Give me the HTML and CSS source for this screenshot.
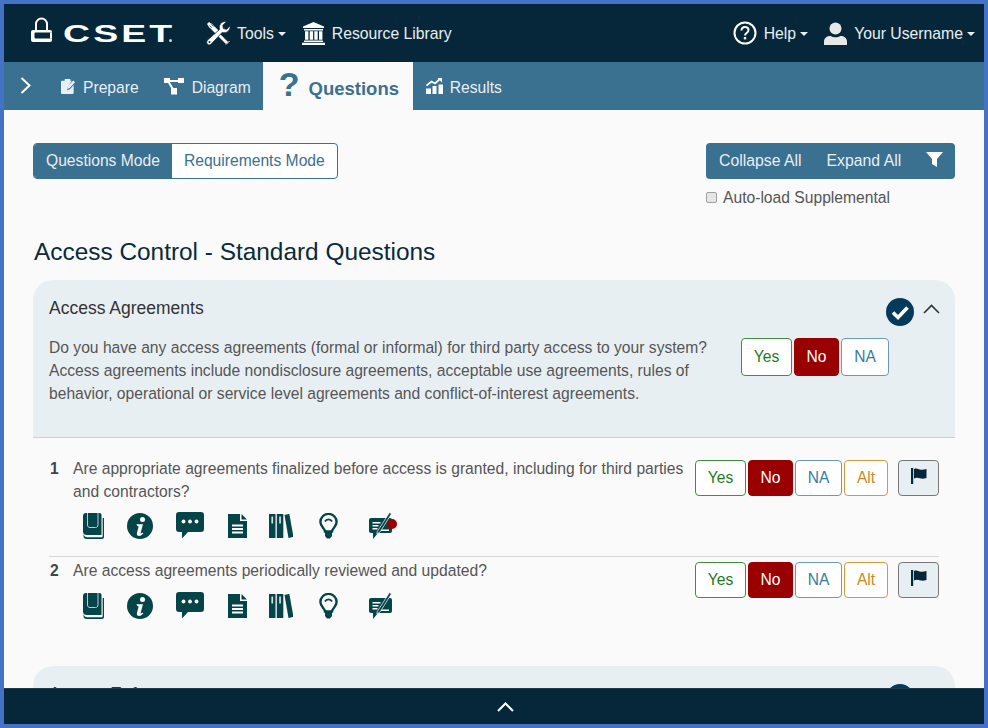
FILE: index.html
```html
<!DOCTYPE html>
<html>
<head lang="en">
    <meta charset="UTF-8">
    <title>CSET</title>
    <link rel="stylesheet" href="styles.css">
</head>
<body>
<svg class="defs" width="0" height="0">
    <symbol id="i-book" viewBox="0 0 21 26">
        <path d="M0.500 20.500V23c0 1.700 1.300 3 3 3H19c1.100 0 2-.9 2-2V5h-1.300v18c0 .8-.5 1.300-1.300 1.300H4c-1.800 0-3-1.300-3.500-3.800z" fill="#05454a"/>
        <path d="M3 0h13.500a2 2 0 0 1 2 2v20H4c-2.400 0-4-1-4-3.500V3a3 3 0 0 1 3-3z" fill="#05454a"/>
        <path d="M4.500 0v12c0 1.500 1 2.500 2.500 2.500h5.500c1.500 0 2.500-1 2.500-2.500V0" fill="none" stroke="#b9cccc" stroke-width="1"/>
    </symbol>
    <symbol id="i-info" viewBox="0 0 26 26">
        <circle cx="13" cy="13" r="13" fill="#05454a"/>
        <circle cx="15.500" cy="6.500" r="2.500" fill="#fff"/>
        <path d="M9.500 11.200h6.500l-2.400 8.700c-.2.800.5 1 1.900-.3l.8.700c-1.700 2.100-3.400 2.900-5 2.500-1.400-.4-1.700-1.500-1.300-2.900l1.600-6.300c.1-.6-.4-.8-1.400-.7z" fill="#fff"/>
    </symbol>
    <symbol id="i-comment" viewBox="0 0 28 27">
        <path d="M3 0h22a3 3 0 0 1 3 3v14a3 3 0 0 1-3 3H12l-6 6.500V20H3a3 3 0 0 1-3-3V3a3 3 0 0 1 3-3z" fill="#05454a"/>
        <circle cx="7.500" cy="9.500" r="1.900" fill="#fff"/>
        <circle cx="14" cy="9.500" r="1.900" fill="#fff"/>
        <circle cx="20.500" cy="9.500" r="1.900" fill="#fff"/>
    </symbol>
    <symbol id="i-doc" viewBox="0 0 19 24">
        <path d="M0 0h12v7h7v17H0z" fill="#05454a"/>
        <path d="M13.500 0l5.500 5.500h-5.500z" fill="#05454a"/>
        <path d="M4 10.500h11v2H4zM4 14h11v2H4zM4 17.500h11v2H4z" fill="#fff"/>
    </symbol>
    <symbol id="i-books" viewBox="0 0 24 24">
        <path d="M0 0h6.500v24H0zM7.800 0h6.500v24H7.800z" fill="#05454a"/>
        <path d="M15.500 1l4.800-1.200L24.500 23l-5 1z" fill="#05454a"/>
        <path d="M2.400 2.500h1.700v7H2.400zM10.200 2.500h1.700v7h-1.700z" fill="#d5e0e0"/>
    </symbol>
    <symbol id="i-bulb" viewBox="0 0 19 26">
        <path d="M6 18.500c0-3-4.600-4.500-4.600-9.500a8.100 8.100 0 0 1 16.200 0c0 5-4.600 6.500-4.600 9.500z" fill="none" stroke="#05454a" stroke-width="2.400"/>
        <path d="M6 19h7v4l-2 2.500H8l-2-2.500z" fill="#05454a"/>
        <path d="M6 8.500a4 4 0 0 1 7 0" fill="none" stroke="#05454a" stroke-width="1.800"/>
    </symbol>
    <symbol id="i-note" viewBox="0 0 23 27">
        <path d="M2 6h19a2 2 0 0 1 2 2v11a2 2 0 0 1-2 2H9l-5 6v-6H2a2 2 0 0 1-2-2V8a2 2 0 0 1 2-2z" fill="#05454a"/>
        <path d="M3.500 10h8v1.500h-8zM3.500 13h6v1.500h-6zM3.500 16h5v1.500h-5zM12 17.500h8V19h-8z" fill="#fff"/>
        <path d="M8 20L20.500 0.500l2 1.300L11 20l-3 2z" fill="#05454a" stroke="#fff" stroke-width=".7"/>
    </symbol>
    <symbol id="i-check" viewBox="0 0 28 28">
        <circle cx="14" cy="14" r="14" fill="#053a5a"/>
        <path d="M7 14.500l5 5 9.500-10" fill="none" stroke="#fff" stroke-width="3.600"/>
    </symbol>
    <symbol id="i-flag" viewBox="0 0 16 16">
        <path d="M0 0h2.200v16H0z" fill="#052739"/>
        <path d="M3 1c3-1.500 5 .8 7 .8 2 0 4-.4 5.500-.8v9c-2 .7-4 .8-5.500.6-2.500-.4-4.500-1.500-7 0z" fill="#052739"/>
    </symbol>
</svg>

<div class="frame">
    <div class="topbar">
        <div class="brand">
            <svg class="lock" viewBox="0 0 21 25" width="21" height="25">
                <path d="M5 13V7a5.500 5.500 0 0 1 11 0v6" fill="none" stroke="#fff" stroke-width="2"/>
                <rect x="0" y="13" width="21" height="12" rx="2" fill="#fff"/>
                <path d="M4.500 15.500H21v6H4.500a1 1 0 0 1-1-1v-4a1 1 0 0 1 1-1z" fill="#052739"/>
                <path d="M19 15.500h2v6h-2z" fill="#fff"/>
            </svg>
            <span class="wordmark">CSET</span>
            <i class="reg"></i>
        </div>
        <a class="top-link tools">
            <svg viewBox="0 0 24 24" width="24" height="24">
                <path d="M2.500 5.500l3-3 7 7-3 3z" fill="#fff"/>
                <path d="M1 3l2-2 3.500 2.500L3.500 6.500z" fill="#fff"/>
                <path d="M3.500 4.500l2.200 2.200M5.200 3.300l2.200 2.200" stroke="#052739" stroke-width=".8"/>
                <path d="M10 11l11 11" stroke="#fff" stroke-width="3"/>
                <path d="M20 23.500l3.500-3.500" stroke="#fff" stroke-width="1"/>
                <path d="M1.800 18.800L13.500 8.500c-.8-3 .3-5.500 2.300-7 1.500-1 3.200-1.200 4.700-.8l-3.700 3.600.6 3.300 3.300.7L24 4.800c.4 2-.3 4-1.800 5.400-1.800 1.600-4 2-6 1.200L5.300 23c-1.300 1.300-3 1.200-4 .1-1-1.100-.9-3 .5-4.300z" fill="#fff" stroke="#052739" stroke-width=".8"/>
                <circle cx="3.500" cy="21" r="1" fill="#052739"/>
            </svg>
            <span>Tools</span><i class="caret"></i>
        </a>
        <a class="top-link library">
            <svg viewBox="0 0 23 23" width="23" height="23">
                <path d="M11.500 0L22 4.500V6H1V4.500z" fill="#fff"/>
                <path d="M2 7h19v1.500H2zM3 9.300h3.400v8.400H3zM7.700 9.300h3.400v8.400H7.700zM12.300 9.300h3.400v8.400h-3.400zM17 9.300h3.400v8.400H17zM2 18.500h19V20H2zM0 20.800h23V23H0z" fill="#fff"/>
            </svg>
            <span>Resource Library</span>
        </a>
        <div class="spacer"></div>
        <a class="top-link help">
            <svg viewBox="0 0 24 24" width="24" height="24">
                <circle cx="12" cy="12" r="10.500" fill="none" stroke="#fff" stroke-width="2"/>
                <path d="M8.500 9.500c0-2.300 1.600-3.500 3.500-3.500s3.500 1.200 3.500 3.200c0 2.800-3.500 2.800-3.500 5.300" fill="none" stroke="#fff" stroke-width="2"/>
                <rect x="10.800" y="16" width="2.400" height="2.400" fill="#fff"/>
            </svg>
            <span>Help</span><i class="caret"></i>
        </a>
        <a class="top-link user">
            <svg viewBox="0 0 23 23" width="23" height="23">
                <circle cx="11.500" cy="6.500" r="6" fill="#e8e8e8"/>
                <path d="M0 23v-3.500c0-3.500 3-5.500 6.500-5.500 1.500 1 3 1.300 5 1.300s3.500-.3 5-1.300c3.500 0 6.500 2 6.500 5.500V23z" fill="#e8e8e8"/>
            </svg>
            <span>Your Username</span><i class="caret"></i>
        </a>
    </div>

    <div class="subnav">
        <svg class="toggle" viewBox="0 0 11 17" width="11" height="17">
            <path d="M1.500 1l8 7.500-8 7.500" fill="none" stroke="#fff" stroke-width="2"/>
        </svg>
        <a class="tab prepare">
            <svg viewBox="0 0 16 17" width="15" height="16">
                <path d="M1 3h3V1h6v2h1.500L7 10l-.5 3 3-1 4-4.500V16a1 1 0 0 1-1 1H1a1 1 0 0 1-1-1V4a1 1 0 0 1 1-1z" fill="#e8eef2"/>
                <path d="M13 2.500l2 2-6 6.500-2.500.7.600-2.700z" fill="#e8eef2"/>
            </svg>
            <span>Prepare</span>
        </a>
        <a class="tab diagram">
            <svg viewBox="0 0 20 17" width="20" height="17">
                <path d="M4 3h12M4 3l6 10" stroke="#fff" stroke-width="2" fill="none"/>
                <rect x="0" y="0" width="6" height="5" fill="#fff"/>
                <rect x="14" y="0" width="6" height="5" fill="#fff"/>
                <rect x="7" y="10" width="6" height="6.500" fill="#fff"/>
            </svg>
            <span>Diagram</span>
        </a>
        <a class="tab active">
            <span class="q-mark">?</span>
            <span>Questions</span>
        </a>
        <a class="tab results">
            <svg viewBox="0 0 17 16" width="17" height="16">
                <path d="M0 10.500h5V16H0zM6.500 8h4v8h-4zM12.500 6.500H17V16h-4.500z" fill="#fff"/>
                <path d="M.5 7.500L5.500 3.500l3.500 2L14 1" fill="none" stroke="#fff" stroke-width="1.800"/>
                <path d="M11.500 0H16v4.500z" fill="#fff"/>
            </svg>
            <span>Results</span>
        </a>
    </div>

    <div class="main">
        <div class="toolbar">
            <div class="mode-group">
                <a class="mode on">Questions Mode</a>
                <a class="mode">Requirements Mode</a>
            </div>
            <div class="tools-side">
                <div class="action-group">
                    <a class="action collapse">Collapse All</a>
                    <a class="action expand">Expand All</a>
                    <svg class="funnel" viewBox="0 0 17 15" width="17" height="15">
                        <path d="M0 0h17l-6 7v8l-5-3V7z" fill="#fff"/>
                    </svg>
                </div>
                <label class="autoload"><input type="checkbox"><span>Auto-load Supplemental</span></label>
            </div>
        </div>

        <h2 class="page-title">Access Control - Standard Questions</h2>

        <div class="card">
            <div class="card-head">
                <div class="card-title-row">
                    <span class="card-title">Access Agreements</span>
                    <svg class="check" width="28" height="28"><use href="#i-check"/></svg>
                    <svg class="chev" viewBox="0 0 17 10" width="17" height="10"><path d="M1 9l7.500-7.500L16 9" fill="none" stroke="#333" stroke-width="1.600"/></svg>
                </div>
                <div class="card-question">
                    <p>Do you have any access agreements (formal or informal) for third party access to your system? Access agreements include nondisclosure agreements, acceptable use agreements, rules of behavior, operational or service level agreements and conflict-of-interest agreements.</p>
                    <div class="answers head-answers">
                        <a class="ans yes">Yes</a>
                        <a class="ans no">No</a>
                        <a class="ans na">NA</a>
                    </div>
                </div>
            </div>

            <div class="q-list">
                <div class="q-row">
                    <span class="q-num">1</span>
                    <div class="q-body">
                        <p>Are appropriate agreements finalized before access is granted, including for third parties and contractors?</p>
                        <div class="q-icons">
                            <svg width="21" height="26"><use href="#i-book"/></svg>
                            <svg width="26" height="26"><use href="#i-info"/></svg>
                            <svg width="28" height="27"><use href="#i-comment"/></svg>
                            <svg width="19" height="24"><use href="#i-doc"/></svg>
                            <svg width="24" height="24"><use href="#i-books"/></svg>
                            <svg width="19" height="26"><use href="#i-bulb"/></svg>
                            <span class="note-wrap">
                                <svg width="23" height="27"><use href="#i-note"/></svg>
                                <i class="dot"></i>
                            </span>
                        </div>
                    </div>
                    <div class="answers">
                        <a class="ans yes">Yes</a>
                        <a class="ans no">No</a>
                        <a class="ans na">NA</a>
                        <a class="ans alt">Alt</a>
                        <a class="flag"><svg width="16" height="16"><use href="#i-flag"/></svg></a>
                    </div>
                </div>
                <div class="q-row">
                    <span class="q-num">2</span>
                    <div class="q-body">
                        <p>Are access agreements periodically reviewed and updated?</p>
                        <div class="q-icons">
                            <svg width="21" height="26"><use href="#i-book"/></svg>
                            <svg width="26" height="26"><use href="#i-info"/></svg>
                            <svg width="28" height="27"><use href="#i-comment"/></svg>
                            <svg width="19" height="24"><use href="#i-doc"/></svg>
                            <svg width="24" height="24"><use href="#i-books"/></svg>
                            <svg width="19" height="26"><use href="#i-bulb"/></svg>
                            <span class="note-wrap">
                                <svg width="23" height="27"><use href="#i-note"/></svg>
                            </span>
                        </div>
                    </div>
                    <div class="answers">
                        <a class="ans yes">Yes</a>
                        <a class="ans no">No</a>
                        <a class="ans na">NA</a>
                        <a class="ans alt">Alt</a>
                        <a class="flag"><svg width="16" height="16"><use href="#i-flag"/></svg></a>
                    </div>
                </div>
            </div>
        </div>

        <div class="card next-card">
            <div class="card-head">
                <div class="card-title-row">
                    <span class="card-title">Access Enforcement</span>
                    <svg class="check" width="28" height="28"><use href="#i-check"/></svg>
                    <svg class="chev" viewBox="0 0 17 10" width="17" height="10"><path d="M1 9l7.500-7.500L16 9" fill="none" stroke="#333" stroke-width="1.600"/></svg>
                </div>
            </div>
        </div>
    </div>

    <div class="bottombar">
        <svg viewBox="0 0 17 10" width="17" height="10"><path d="M1 9l7.500-7.500L16 9" fill="none" stroke="#fff" stroke-width="2"/></svg>
    </div>
</div>
</body>
</html>
```

FILE: styles.css
```css
*{
    margin: 0;
    padding: 0;
    box-sizing: border-box;
}
html,body{
    height: 100%;
    overflow: hidden;
}
body{
    font-family: "Liberation Sans", Arial, sans-serif;
    font-size: 15.65px;
    color: #555;
    background: #fafafa;
}
a{
    cursor: pointer;
}
svg{
    display: block;
    flex: none;
}
.defs{
    position: absolute;
}
.frame{
    display: flex;
    flex-direction: column;
    width: 988px;
    height: 728px;
    border: 4px solid #4472c4;
    background: #fafafa;
}

/* top bar */
.topbar{
    display: flex;
    align-items: center;
    height: 58px;
    padding-left: 27px;
    padding-right: 9px;
    background: #052739;
    color: #e8eef2;
    font-size: 15.75px;
    flex: none;
}
.brand{
    display: flex;
    align-items: center;
}
.lock{
    margin-bottom: 7px;
}
.wordmark{
    display: block;
    width: 106px;
    margin-left: 11px;
    margin-top: 2px;
    color: #fff;
    font-size: 24px;
    line-height: 24px;
    font-weight: bold;
    letter-spacing: 2px;
    transform: scaleX(1.56);
    transform-origin: left center;
}
.reg{
    display: block;
    width: 3px;
    height: 3px;
    margin-top: 14px;
    background: #cfd6da;
    border-radius: 50%;
}
.top-link{
    display: flex;
    align-items: center;
}
.top-link span{
    margin-top: 2px;
}
.tools{
    margin-left: 34px;
}
.tools span{
    margin-left: 7px;
}
.library{
    margin-left: 16px;
}
.library span{
    margin-left: 7px;
}
.help span{
    margin-left: 7px;
}
.user{
    margin-left: 16px;
}
.user span{
    margin-left: 7px;
}
.spacer{
    flex: 1;
}
.caret{
    display: block;
    width: 0;
    height: 0;
    margin-left: 4px;
    margin-top: 1px;
    border-top: 4.500px solid #e8eef2;
    border-left: 4.500px solid transparent;
    border-right: 4.500px solid transparent;
}

/* sub nav */
.subnav{
    display: flex;
    align-items: stretch;
    height: 48px;
    background: #3a7090;
    color: #e8eef2;
    font-size: 15.65px;
    flex: none;
}
.toggle{
    align-self: center;
    margin-left: 16px;
    margin-right: 30px;
    margin-top: -2px;
}
.tab{
    display: flex;
    align-items: center;
    gap: 8px;
    padding-top: 4px;
}
.tab svg{
    margin-top: -4px;
}
.prepare{
    gap: 7px;
    margin-right: 25px;
}
.diagram{
    margin-right: 12px;
}
.tab.active{
    height: 49px;
    width: 150px;
    padding-left: 16px;
    gap: 9px;
    background: #fafafa;
    color: #3a7090;
    font-size: 18.500px;
    font-weight: bold;
}
.q-mark{
    font-size: 34px;
    line-height: 34px;
    margin-top: -10px;
}
.results{
    margin-left: 13px;
    gap: 7px;
}

/* page */
.main{
    flex: 1;
    min-height: 0;
    overflow: hidden;
    padding: 33px 29px 0;
}
.toolbar{
    display: flex;
    justify-content: space-between;
    align-items: flex-start;
}
.mode-group{
    display: flex;
    height: 36px;
    font-size: 15.65px;
    line-height: 34px;
    color: #3a7090;
    background: #fff;
    border: 1px solid #3a7090;
    border-radius: 4px;
    overflow: hidden;
}
.mode{
    padding: 0 12px;
}
.mode.on{
    background: #3a7090;
    color: #e8eef2;
}
.tools-side{
    width: 249px;
}
.action-group{
    display: flex;
    align-items: center;
    height: 36px;
    padding-left: 13px;
    background: #3a7090;
    border-radius: 4px;
    color: #e8eef2;
    font-size: 15.8px;
}
.action{
    margin-right: 25px;
}
.funnel{
    margin-top: -4px;
}
.autoload{
    display: flex;
    align-items: center;
    margin-top: 10px;
    line-height: 18px;
}
.autoload input{
    appearance: none;
    width: 11px;
    height: 11px;
    margin: -2px 6px 0 0;
    background: #e6e6e6;
    border: 1px solid #a0a0a0;
    border-radius: 2px;
}
.page-title{
    margin-top: 30px;
    margin-bottom: 13px;
    margin-left: 1px;
    font-size: 24.4px;
    line-height: 30px;
    font-weight: normal;
    color: #0a2a3a;
}

/* cards */
.card{
    border-radius: 20px 20px 0 0;
}
.card-head{
    padding: 16px 16px 0;
    height: 158px;
    background: #e8eff3;
    border-bottom: 1px solid #ccd2d6;
    border-radius: 20px 20px 0 0;
}
.card-title-row{
    display: flex;
    align-items: center;
    height: 28px;
    margin-top: -2px;
}
.card-title{
    flex: 1;
    font-size: 17.5px;
    color: #333;
}
.check{
    margin-top: 8px;
}
.chev{
    margin-left: 9px;
    margin-right: -1px;
    margin-top: 1px;
}
.card-question{
    display: flex;
    align-items: flex-start;
    margin-top: 15px;
    line-height: 23px;
}
.card-question p{
    flex: 1;
    padding-right: 24px;
    margin-top: -1px;
}
.answers{
    display: flex;
    gap: 2px;
    margin-top: 3px;
}
.head-answers{
    margin-top: 1px;
    margin-right: 50px;
}
.ans{
    display: block;
    height: 36px;
    line-height: 34px;
    text-align: center;
    font-size: 15.6px;
    background: #fff;
    border: 1px solid;
    border-radius: 4px;
}
.head-answers .ans{
    height: 38px;
    line-height: 36px;
}
.yes{
    width: 51px;
    color: #1e7a1e;
    border-color: #3f8f3f;
}
.no{
    width: 45px;
    color: #fff;
    background: #990000;
    border-color: #990000;
}
.na{
    width: 47px;
    color: #3a7a9e;
    border-color: #6b9ab5;
}
.head-answers .na{
    width: 48px;
}
.alt{
    width: 44px;
    color: #c98a1e;
    border-color: #d19a3e;
}
.flag{
    display: flex;
    justify-content: center;
    width: 41px;
    height: 36px;
    margin-left: 8px;
    padding-top: 7px;
    background: #e8eff3;
    border: 1px solid #777;
    border-radius: 4px;
}

/* question rows */
.q-list{
    padding: 19px 16px 0;
}
.q-row{
    display: flex;
    align-items: flex-start;
    line-height: 23px;
    padding-top: 2px;
    padding-bottom: 17px;
    border-bottom: 1px solid #d8d8d8;
}
.q-row:first-child{
    padding-top: 0;
}
.q-row:last-child{
    border-bottom: 0;
    padding-bottom: 47px;
}
.q-row:last-child .q-icons{
    margin-top: 10px;
}
.q-num{
    width: 24px;
    padding-left: 1px;
    font-weight: bold;
    color: #444;
}
.q-body{
    flex: 1;
    padding-right: 10px;
}
.q-icons{
    display: grid;
    grid-template-columns: 44px 49px 52px 41px 50px 50px 30px;
    justify-items: start;
    align-items: center;
    height: 27px;
    margin-top: 9px;
    margin-left: 10px;
}
.note-wrap{
    display: block;
    position: relative;
    width: 23px;
    height: 27px;
}
.dot{
    position: absolute;
    top: 7px;
    left: 18px;
    width: 10px;
    height: 10px;
    background: #990000;
    border-radius: 50%;
}
.bottombar{
    display: flex;
    align-items: center;
    justify-content: center;
    height: 36px;
    padding-left: 22px;
    background: #052739;
    border-top: 1px solid #1c3d4e;
    flex: none;
}
```
